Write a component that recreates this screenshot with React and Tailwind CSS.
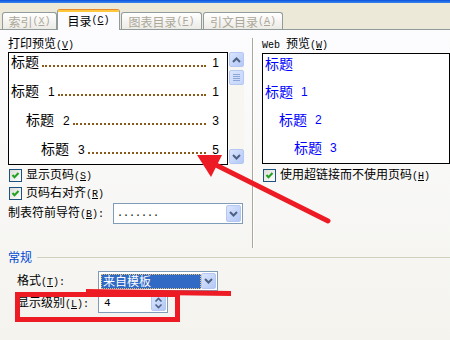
import React from "react";

function M({ c }) {
  return (
    <span className="font-['Liberation_Mono',monospace] text-[10px]">
      (<span className="underline underline-offset-[1px]">{c}</span>)
    </span>
  );
}

function Check() {
  return (
    <div className="w-[13px] h-[13px] shrink-0 border border-[#1c5180] bg-gradient-to-br from-[#dcdcd7] to-white flex items-center justify-center">
      <svg width="9" height="9" viewBox="0 0 9 9">
        <path d="M1.5 4 L3.5 6.3 L7.5 2" stroke="#21a121" strokeWidth="2" fill="none" />
      </svg>
    </div>
  );
}

function XPBtn({ up, cls }) {
  return (
    <div className={"rounded-[2px] border border-[#b4c8f3] bg-gradient-to-br from-[#dbe5fd] to-[#b3c8f6] flex items-center justify-center " + cls}>
      <svg width="9" height="6" viewBox="0 0 9 6">
        <path d={up ? "M1 5 L4.5 1.5 L8 5" : "M1 1 L4.5 4.5 L8 1"} stroke="#4d6185" strokeWidth="2" fill="none" />
      </svg>
    </div>
  );
}

function Num({ children }) {
  return <span className="font-['Liberation_Sans',sans-serif] text-[12px] leading-[14px]">{children}</span>;
}

const printRows = [
  { pad: "pl-[2px]", num: null, page: "1" },
  { pad: "pl-[2px]", num: "1", page: "1" },
  { pad: "pl-[17px]", num: "2", page: "3" },
  { pad: "pl-[32px]", num: "3", page: "5" },
];

const webRows = [
  { pad: "pl-[2px]", num: null },
  { pad: "pl-[2px]", num: "1" },
  { pad: "pl-[16px]", num: "2" },
  { pad: "pl-[31px]", num: "3" },
];

export default function App() {
  return (
    <div className="w-[450px] h-[340px] relative overflow-hidden bg-[#ece9d8] font-['Noto_Sans_CJK_SC',sans-serif] text-[12px] text-black leading-[14px]">
      <div className="h-[3px] bg-gradient-to-b from-[#0a52dc] to-[#3b86f0]" />
      {/* tabs */}
      <div className="h-[26px] flex items-end pl-[2px]">
        <div className="w-[55px] h-[17px] border border-b-0 border-[#919b9c] rounded-t-[3px] bg-gradient-to-b from-white to-[#ecebe6] text-[#aca899] flex items-center justify-center pt-[2px]">
          索引<M c="X" />
        </div>
        <div className="w-[63px] h-[21px] -mb-px relative z-10 border border-b-0 border-[#919b9c] border-t-[#e68b2c] rounded-t-[3px] bg-[#fcfcfe] flex flex-col">
          <div className="h-[2px] bg-[#ffc83c]" />
          <div className="flex-1 flex items-center justify-center pb-[1px]">
            目录<M c="C" />
          </div>
        </div>
        <div className="w-[81px] ml-[1px] h-[17px] border border-b-0 border-[#919b9c] rounded-t-[3px] bg-gradient-to-b from-white to-[#ecebe6] text-[#aca899] flex items-center justify-center pt-[2px]">
          图表目录<M c="F" />
        </div>
        <div className="w-[80px] ml-[1px] h-[17px] border border-b-0 border-[#919b9c] rounded-t-[3px] bg-gradient-to-b from-white to-[#ecebe6] text-[#aca899] flex items-center justify-center pt-[2px]">
          引文目录<M c="A" />
        </div>
      </div>

      {/* panel */}
      <div className="h-[311px] border-t border-[#919b9c] bg-gradient-to-b from-[#fcfcfe] to-[#f4f3ee] flex flex-col">
        <div className="flex pt-[6px] pl-[8px]">
          {/* left column */}
          <div className="w-[237px] flex flex-col">
            <div className="h-[14px]">打印预览<M c="V" /></div>
            <div className="flex mt-[2px] h-[113px]">
              <div className="w-[220px] border border-black bg-white flex flex-col gap-[7px] pr-[8px]">
                {printRows.map((r, i) => (
                  <div key={i} className={"h-[22px] flex items-end pb-[5px] " + r.pad}>
                    <span className="text-[14px] leading-[18px]">标题</span>
                    {r.num && <span className="ml-[9px]"><Num>{r.num}</Num></span>}
                    <div className="flex-1 ml-[3px] mb-[3px] border-b-2 border-dotted border-[#8a5a1a]" />
                    <span className="ml-[6px]"><Num>{r.page}</Num></span>
                  </div>
                ))}
              </div>
              <div className="ml-[1px] w-[15px] flex flex-col bg-[#f7f6f1]">
                <XPBtn up cls="w-[15px] h-[15px]" />
                <div className="mt-[3px] w-[15px] h-[15px] rounded-[2px] border border-[#b4c8f3] bg-gradient-to-br from-[#dbe5fd] to-[#c4d5fb] flex flex-col items-center justify-center gap-[1px]">
                  <div className="w-[7px] h-px bg-[#8da6d8]" />
                  <div className="w-[7px] h-px bg-[#8da6d8]" />
                  <div className="w-[7px] h-px bg-[#8da6d8]" />
                  <div className="w-[7px] h-px bg-[#8da6d8]" />
                </div>
                <div className="flex-1" />
                <XPBtn cls="w-[15px] h-[15px] mb-[1px]" />
              </div>
            </div>
            <div className="mt-[4px] h-[13px] flex items-center pl-[1px]">
              <Check />
              <span className="ml-[4px]">显示页码<M c="S" /></span>
            </div>
            <div className="mt-[5px] h-[13px] flex items-center pl-[1px]">
              <Check />
              <span className="ml-[4px]">页码右对齐<M c="R" /></span>
            </div>
            <div className="mt-[3px] h-[21px] flex items-center">
              <div className="w-[105px]">制表符前导符<M c="B" /><span className="font-['Liberation_Mono',monospace] text-[10px]">:</span></div>
              <div className="w-[130px] h-[21px] border border-[#7f9db9] bg-white flex items-center p-[1px]">
                <span className="pl-[2px] font-['Liberation_Mono',monospace] text-[10px] leading-[12px]">.......</span>
                <XPBtn cls="ml-auto w-[15px] h-[17px]" />
              </div>
            </div>
          </div>

          {/* separator */}
          <div className="ml-[8px] mt-[2px] w-[2px] h-[210px] border-l border-[#aca899] bg-white" />

          {/* right column */}
          <div className="ml-[8px] w-[200px] flex flex-col">
            <div className="h-[14px]">
              <span className="font-['Liberation_Mono',monospace] text-[10px]">Web </span>预览<M c="W" />
            </div>
            <div className="mt-[3px] h-[111px] border border-black bg-white flex flex-col gap-[8px] text-[#0000ff]">
              {webRows.map((r, i) => (
                <div key={i} className={"h-[20px] flex items-center pb-[3px] " + r.pad}>
                  <span className="text-[14px] leading-[18px]">标题</span>
                  {r.num && <span className="ml-[8px] mt-[2px]"><Num>{r.num}</Num></span>}
                </div>
              ))}
            </div>
            <div className="mt-[5px] h-[13px] flex items-center pl-[1px]">
              <Check />
              <span className="ml-[4px]">使用超链接而不使用页码<M c="H" /></span>
            </div>
          </div>
        </div>

        {/* group */}
        <div className="mt-[2px] h-[14px] flex items-center pl-[8px]">
          <span className="text-[#0046d5]">常规</span>
          <div className="flex-1 ml-[5px] h-px bg-[#d0d0bf]" />
        </div>
        <div className="mt-[7px] h-[20px] flex items-center pl-[17px]">
          <div className="w-[81px]">格式<M c="T" /><span className="font-['Liberation_Mono',monospace] text-[10px]">:</span></div>
          <div className="w-[120px] h-[20px] border border-[#7f9db9] bg-white flex items-center p-[1px]">
            <div className="ml-[1px] w-[101px] h-[15px] bg-[#316ac5] border border-dotted border-[#e8c070] text-white flex items-center pl-[1px]">
              来自模板
            </div>
            <XPBtn cls="ml-auto w-[15px] h-[16px]" />
          </div>
        </div>
        <div className="mt-[2px] h-[20px] flex items-center pl-[17px]">
          <div className="w-[81px]">显示级别<M c="L" /><span className="font-['Liberation_Mono',monospace] text-[10px]">:</span></div>
          <div className="w-[70px] h-[20px] border border-[#7f9db9] bg-white flex items-center p-[1px]">
            <span className="pl-[4px] font-['Liberation_Mono',monospace] text-[11px]">4</span>
            <div className="ml-auto w-[15px] h-[16px] rounded-[2px] border border-[#b4c8f3] bg-gradient-to-br from-[#dbe5fd] to-[#b3c8f6] flex items-center justify-center">
              <svg width="9" height="12" viewBox="0 0 9 12">
                <path d="M1.5 4.5 L4.5 1.5 L7.5 4.5" stroke="#4d6185" strokeWidth="1.6" fill="none" />
                <path d="M1.5 7.5 L4.5 10.5 L7.5 7.5" stroke="#4d6185" strokeWidth="1.6" fill="none" />
              </svg>
            </div>
          </div>
        </div>
      </div>

      {/* red annotations */}
      <svg className="absolute inset-0 pointer-events-none" width="450" height="340" viewBox="0 0 450 340">
        <line x1="328" y1="221" x2="212" y2="163" stroke="#ed1c24" strokeWidth="5" strokeLinecap="round" />
        <polygon points="197,155 222,155 211,177" fill="#ed1c24" />
        <line x1="86" y1="291.5" x2="231" y2="293.5" stroke="#ed1c24" strokeWidth="5" />
        <rect x="17.5" y="294.5" width="160" height="25" fill="none" stroke="#ed1c24" strokeWidth="5" />
      </svg>
    </div>
  );
}
